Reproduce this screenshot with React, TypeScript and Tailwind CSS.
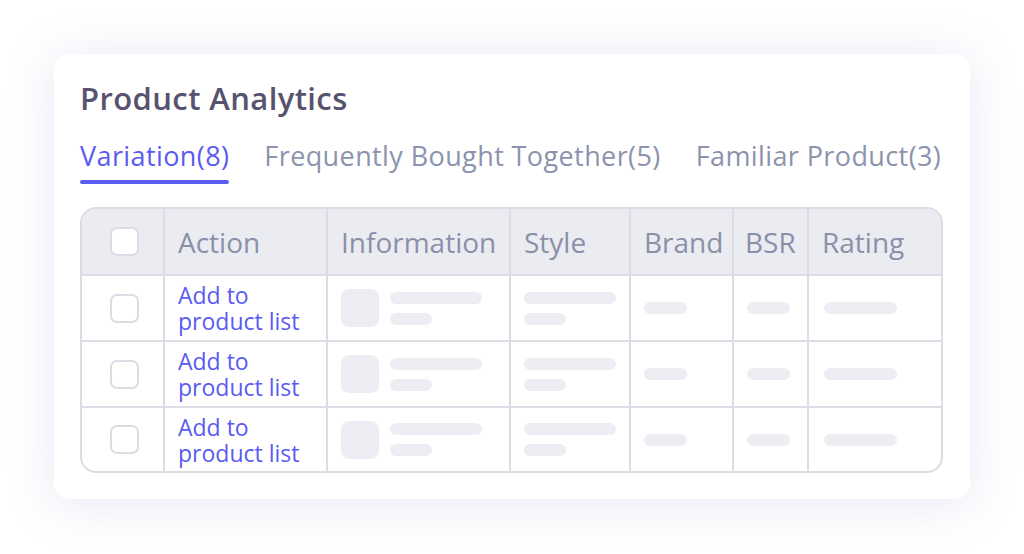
const rows = [0, 1, 2];
const cols = "grid grid-cols-[83px_163px_183px_120px_103px_75px_1fr]";

function Checkbox() {
  return <div className="w-[29px] h-[29px] rounded-[7px] border-2 border-[#dcdce4] bg-white" />;
}

function Bar({ w }: { w: string }) {
  return <div className={`h-3 rounded-full bg-[#eceef3] ${w}`} />;
}

export default function App() {
  return (
    <div
      className="w-[1024px] h-[554px] bg-white pl-[54px] pt-[54px]"
      style={{ fontFamily: '"Open Sans", "Noto Sans", sans-serif' }}
    >
      <div className="w-[916px] h-[445px] bg-white rounded-[14px] shadow-[0_4px_48px_rgba(200,204,230,0.45)] pl-[26px] pr-[27px] pt-[24px]">
        <h1 className="text-[31px] leading-[40px] font-semibold tracking-[0.4px] text-[#57526e]">
          Product Analytics
        </h1>

        <div className="flex gap-[35px] mt-[20px] text-[27px] leading-[36px] tracking-[0.4px]">
          <div className="flex flex-col">
            <span className="text-[#5a5bf0]">Variation(8)</span>
            <div className="h-1 rounded-full bg-[#5a5bf0] mt-[6px]" />
          </div>
          <span className="text-[#8c93ad]">Frequently Bought Together(5)</span>
          <span className="text-[#8c93ad]">Familiar Product(3)</span>
        </div>

        {/* table */}
        <div className="mt-[23px] border-2 border-[#dcdce4] rounded-2xl overflow-hidden">
          <div className={`${cols} h-[67px] bg-[#eaecf2] text-[28px] text-[#8a90a8] border-b-2 border-[#dcdce4]`}>
            <div className="flex items-center justify-center pl-1 border-r-2 border-[#dcdce4]">
              <Checkbox />
            </div>
            <div className="flex items-center pl-[13px] border-r-2 border-[#dcdce4]">Action</div>
            <div className="flex items-center pl-[13px] border-r-2 border-[#dcdce4]">Information</div>
            <div className="flex items-center pl-[13px] border-r-2 border-[#dcdce4]">Style</div>
            <div className="flex items-center pl-[13px] border-r-2 border-[#dcdce4]">Brand</div>
            <div className="flex items-center pl-[11px] border-r-2 border-[#dcdce4]">BSR</div>
            <div className="flex items-center pl-[13px]">Rating</div>
          </div>

          {rows.map((r) => (
            <div
              key={r}
              className={`${cols} ${r < 2 ? "h-[66px] border-b-2 border-[#dcdce4]" : "h-[63px]"}`}
            >
              <div className="flex items-center justify-center pl-1 border-r-2 border-[#dcdce4]">
                <Checkbox />
              </div>
              <div className="flex items-center pl-[13px] border-r-2 border-[#dcdce4]">
                <span className="text-[23px] leading-[26px] text-[#5a5bf0]">
                  Add to
                  <br />
                  product list
                </span>
              </div>
              <div className="flex items-center gap-[11px] pl-[13px] border-r-2 border-[#dcdce4]">
                <div className="w-[38px] h-[38px] rounded-lg bg-[#eceef3]" />
                <div className="flex flex-col gap-[9px]">
                  <Bar w="w-[92px]" />
                  <Bar w="w-[42px]" />
                </div>
              </div>
              <div className="flex items-center pl-[13px] border-r-2 border-[#dcdce4]">
                <div className="flex flex-col gap-[9px]">
                  <Bar w="w-[92px]" />
                  <Bar w="w-[42px]" />
                </div>
              </div>
              <div className="flex items-center pl-[13px] border-r-2 border-[#dcdce4]">
                <Bar w="w-[43px]" />
              </div>
              <div className="flex items-center pl-[13px] border-r-2 border-[#dcdce4]">
                <Bar w="w-[43px]" />
              </div>
              <div className="flex items-center pl-[15px]">
                <Bar w="w-[73px]" />
              </div>
            </div>
          ))}
        </div>
      </div>
    </div>
  );
}
